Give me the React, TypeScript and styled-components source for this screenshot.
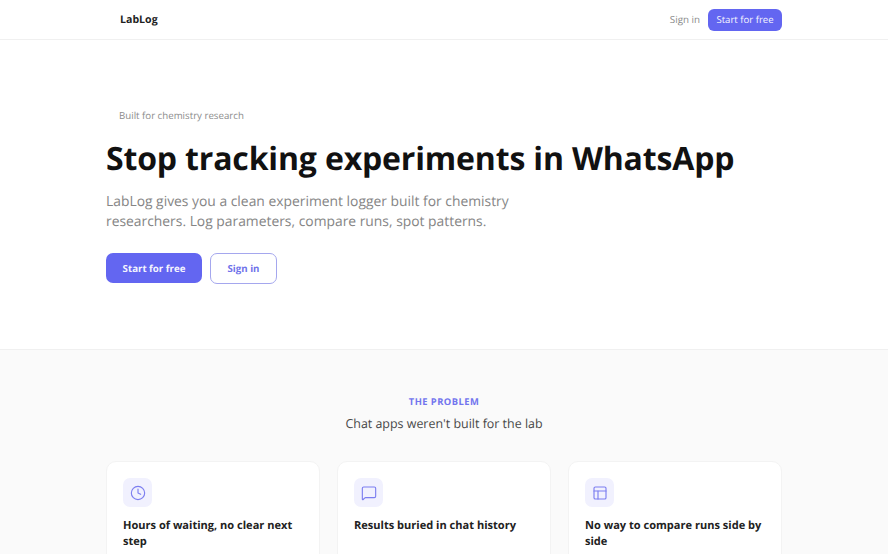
import React from "react";
import styled, { createGlobalStyle } from "styled-components";
import { Clock, MessageSquare, PanelsTopLeft } from "lucide-react";

const Global = createGlobalStyle`
  html, body { margin: 0; padding: 0; background: #fff; }
  body { font-family: "Open Sans", "Liberation Sans", sans-serif; overflow: hidden; height: 554px; text-rendering: geometricPrecision; }
  * { box-sizing: border-box; }
`;

const Nav = styled.nav`
  height: 40px;
  border-bottom: 1px solid #f0f0f0;
  display: flex;
  justify-content: center;
`;
const NavInner = styled.div`
  width: 676px;
  display: flex;
  align-items: center;
  justify-content: space-between;
  padding-left: 14px;
`;
const Logo = styled.div`
  margin-top: 1px;
  font-size: 10.6px;
  font-weight: 700;
  color: #1f1f1f;
`;
const NavActions = styled.div`
  display: flex;
  align-items: center;
  gap: 8px;
`;
const NavLink = styled.a`
  font-size: 9.8px;
  color: #8a8a8a;
`;
const NavButton = styled.a`
  height: 22px;
  width: 74px;
  border-radius: 6px;
  background: #6366f1;
  color: #f4f4fe;
  font-size: 9.6px;
  display: flex;
  align-items: center;
  justify-content: center;
`;
const Hero = styled.section`
  height: 310px;
  border-bottom: 1px solid #f0f0f0;
  display: flex;
  justify-content: center;
  padding-top: 69px;
`;
const HeroInner = styled.div`
  width: 676px;
`;
const Eyebrow = styled.div`
  font-size: 9.7px;
  line-height: 14px;
  color: #8c8c8c;
  padding-left: 13px;
`;
const Title = styled.h1`
  margin: 15px 0 0;
  font-size: 32px;
  line-height: 42px;
  font-weight: 700;
  letter-spacing: -0.16px;
  color: #111;
  white-space: nowrap;
`;
const Lead = styled.p`
  margin: 12px 0 0;
  font-size: 13.86px;
  line-height: 20px;
  color: #858585;
  width: 440px;
`;
const Buttons = styled.div`
  display: flex;
  gap: 8px;
  margin-top: 21px;
`;
const Primary = styled.a`
  width: 96px;
  height: 30px;
  border-radius: 7px;
  background: #6366f1;
  color: #f4f4fe;
  font-size: 9.7px;
  font-weight: 700;
  display: flex;
  align-items: center;
  justify-content: center;
`;
const Secondary = styled.a`
  width: 67px;
  height: 31px;
  border-radius: 7px;
  border: 1px solid #a5a7ee;
  background: #fff;
  color: #6f72ea;
  font-size: 9.7px;
  font-weight: 700;
  display: flex;
  align-items: center;
  justify-content: center;
`;
const Problem = styled.section`
  background: #fafafa;
  height: 204px;
  display: flex;
  flex-direction: column;
  align-items: center;
  padding-top: 46px;
  overflow: hidden;
`;
const Kicker = styled.div`
  font-size: 9.4px;
  line-height: 12px;
  font-weight: 700;
  letter-spacing: 0.45px;
  color: #7275ee;
`;
const SectionTitle = styled.h2`
  margin: 7px 0 0;
  font-size: 12.45px;
  line-height: 18px;
  font-weight: 400;
  color: #484848;
`;
const Cards = styled.div`
  width: 676px;
  display: grid;
  grid-template-columns: repeat(3, 214px);
  justify-content: space-between;
  margin-top: 28px;
`;
const Card = styled.article`
  height: 140px;
  background: #fff;
  border: 1px solid #f3f3f3;
  border-radius: 10px;
  padding: 16px;
`;
const IconBox = styled.div`
  width: 29px;
  height: 29px;
  border-radius: 7px;
  background: #f1f1fe;
  color: #7c7ef0;
  display: flex;
  align-items: center;
  justify-content: center;
  svg { display: block; }
`;
const CardTitle = styled.h3`
  margin: 11px 0 0;
  font-size: 11.05px;
  line-height: 16px;
  font-weight: 700;
  color: #222;
`;

const problems = [
  { icon: Clock, title: "Hours of waiting, no clear next step" },
  { icon: MessageSquare, title: "Results buried in chat history" },
  { icon: PanelsTopLeft, title: "No way to compare runs side by side" },
];

export default function App() {
  return (
    <>
      <Global />
      <Nav>
        <NavInner>
          <Logo>LabLog</Logo>
          <NavActions>
            <NavLink>Sign in</NavLink>
            <NavButton>Start for free</NavButton>
          </NavActions>
        </NavInner>
      </Nav>
      <Hero>
        <HeroInner>
          <Eyebrow>Built for chemistry research</Eyebrow>
          <Title>Stop tracking experiments in WhatsApp</Title>
          <Lead>
            LabLog gives you a clean experiment logger built for chemistry
            researchers. Log parameters, compare runs, spot patterns.
          </Lead>
          <Buttons>
            <Primary>Start for free</Primary>
            <Secondary>Sign in</Secondary>
          </Buttons>
        </HeroInner>
      </Hero>
      <Problem>
        <Kicker>THE PROBLEM</Kicker>
        <SectionTitle>Chat apps weren't built for the lab</SectionTitle>
        <Cards>
          {problems.map(({ icon: Icon, title }) => (
            <Card key={title}>
              <IconBox>
                <Icon size={16} strokeWidth={1.7} />
              </IconBox>
              <CardTitle>{title}</CardTitle>
            </Card>
          ))}
        </Cards>
      </Problem>
    </>
  );
}
